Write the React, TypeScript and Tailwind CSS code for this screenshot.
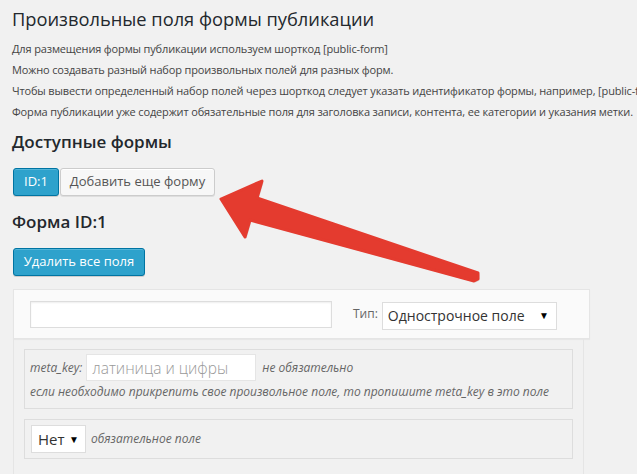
import React from 'react';

const Arrow = () => (
  <svg
    className="absolute left-0 top-0 pointer-events-none"
    width="637"
    height="474"
    viewBox="0 0 637 474"
  >
    <polygon
      points="221,199 262,181 257,198 478,273 478,279 474,281 250,220 245,237"
      fill="#b9b9b9"
      transform="translate(1.5,1.5)"
      opacity="0.5"
    />
    <polygon
      points="221,199 262,181 257,198 478,273 478,279 474,281 250,220 245,237"
      fill="#e43b2f"
      stroke="#e43b2f"
      strokeWidth="3"
      strokeLinejoin="round"
    />
  </svg>
);

const App: React.FC = () => {
  return (
    <div className="relative w-[637px] h-[474px] overflow-hidden bg-[#f1f1f1] font-['Open_Sans',sans-serif] text-[#444]">
      <div className="pl-[12px]">
        {/* заголовок страницы */}
        <h1 className="pt-[3px] text-[18.3px] leading-[31px] font-normal text-[#23282d]">
          Произвольные поля формы публикации
        </h1>

        <div className="mt-[4px] text-[11px] leading-[21px] tracking-[-0.15px] whitespace-nowrap">
          <p>Для размещения формы публикации используем шорткод [public-form]</p>
          <p>Можно создавать разный набор произвольных полей для разных форм.</p>
          <p>Чтобы вывести определенный набор полей через шорткод следует указать идентификатор формы, например, [public-form id="2"]</p>
          <p>Форма публикации уже содержит обязательные поля для заголовка записи, контента, ее категории и указания метки.</p>
        </div>

        <h2 className="mt-[8px] text-[17px] leading-[24px] font-semibold text-[#23282d]">
          Доступные формы
        </h2>

        <div className="mt-[14px] flex gap-[1px] pl-[1px]">
          <button className="h-[28px] w-[46px] rounded-[3px] border border-[#0074a2] bg-[#2ea2cc] text-[13px] text-white shadow-[inset_0_1px_0_rgba(120,200,230,0.5),0_1px_0_rgba(0,0,0,0.15)]">
            ID:1
          </button>
          <button className="h-[28px] w-[155px] rounded-[3px] border border-[#cccccc] bg-[#f7f7f7] text-[13px] text-[#555] shadow-[inset_0_1px_0_#fff,0_1px_0_rgba(0,0,0,0.08)]">
            Добавить еще форму
          </button>
        </div>

        <h2 className="mt-[14px] text-[17px] leading-[24px] font-semibold text-[#23282d]">
          Форма ID:1
        </h2>

        <div className="mt-[14px] pl-[1px]">
          <button className="h-[28px] w-[132px] rounded-[3px] border border-[#0074a2] bg-[#2ea2cc] text-[13px] text-white shadow-[inset_0_1px_0_rgba(120,200,230,0.5),0_1px_0_rgba(0,0,0,0.15)]">
            Удалить все поля
          </button>
        </div>

        {/* блок поля */}
        <div className="mt-[13px] ml-[1px] w-[577px]">
          <div className="flex h-[50px] items-center border border-[#e5e5e5] bg-[#fafafa] pl-[16px] shadow-[0_1px_1px_rgba(0,0,0,0.04)]">
            <input
              readOnly
              className="h-[27px] w-[302px] border border-[#dddddd] bg-white shadow-[inset_0_1px_2px_rgba(0,0,0,0.07)] outline-none"
            />
            <span className="ml-[21px] text-[12px] text-[#666]">Тип:</span>
            <div className="ml-[4px] mt-[3px] flex h-[28px] w-[175px] items-center justify-between border border-[#dddddd] bg-white pl-[5px] pr-[7px] text-[14px] text-[#333] whitespace-nowrap">
              <span>Однострочное поле</span>
              <span className="text-[10px] text-black">▼</span>
            </div>
          </div>

          <div className="mr-[6px] h-[200px] border-x border-[#e5e5e5] px-[10px] pt-[10px]">
            <div className="border border-[#dddddd] px-[5px] pt-[4px] pb-[6px] text-[12px] italic text-[#666] whitespace-nowrap">
              <div className="flex items-center">
                <span>meta_key:</span>
                <input
                  readOnly
                  placeholder="латиница и цифры"
                  className="ml-[4px] h-[27px] w-[170px] border border-[#e5e5e5] bg-white px-[5px] text-[15.5px] not-italic font-light outline-none placeholder:text-[#999]"
                />
                <span className="ml-[6px]">не обязательно</span>
              </div>
              <div className="mt-[1px] leading-[20px]">
                если необходимо прикрепить свое произвольное поле, то пропишите meta_key в это поле
              </div>
            </div>

            <div className="mt-[10px] flex h-[40px] items-center border border-[#dddddd] pl-[6px] text-[12px] italic text-[#666]">
              <div className="flex h-[28px] w-[55px] items-center justify-between border border-[#dddddd] bg-white pl-[6px] pr-[6px] text-[15px] not-italic text-[#333]">
                <span>Нет</span>
                <span className="text-[10px] text-black">▼</span>
              </div>
              <span className="ml-[5px]">обязательное поле</span>
            </div>
          </div>
        </div>
      </div>
      <Arrow />
    </div>
  );
};

export default App;
